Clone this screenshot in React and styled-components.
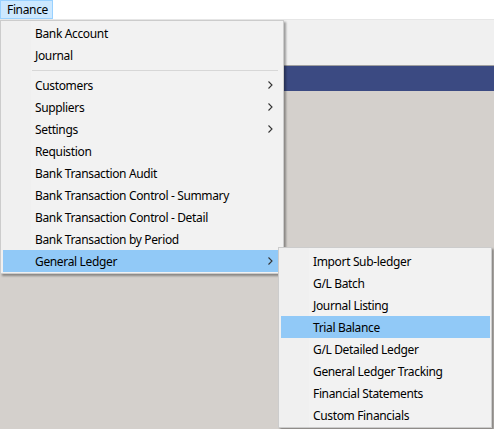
import React from "react";
import styled, { createGlobalStyle } from "styled-components";

const Global = createGlobalStyle`
  html, body { margin: 0; padding: 0; }
  body {
    width: 494px; height: 429px; overflow: hidden;
    font-family: "Noto Sans", "Open Sans", sans-serif;
    font-size: 12px; color: #000;
    letter-spacing: -0.35px;
    background: #d4d0cc;
  }
`;

const Page = styled.div`
  position: relative;
  width: 494px;
  height: 429px;
  display: flex;
  flex-direction: column;
  background: #d4d0cc;
`;

const MenuBar = styled.div`
  height: 19px;
  background: #ffffff;
  border-bottom: 1px solid #e6e6e6;
  display: flex;
  align-items: stretch;
`;

const MenuBarItem = styled.div`
  padding: 0 6px;
  display: flex;
  align-items: center;
  background: ${p => (p.$open ? "#cce8ff" : "transparent")};
  border: 1px solid ${p => (p.$open ? "#99d1ff" : "transparent")};
  height: 17px;
  width: 39px;
`;

const ToolArea = styled.div`
  height: 45px;
  background: #f0f0f0;
  border-bottom: 1px solid #a0a0a0;
`;

const TitleBar = styled.div`
  height: 25px;
  background: #3b4a82;
`;

const Body = styled.div`
  flex: 1;
  background: #d4d0cc;
`;

const Menu = styled.div`
  position: absolute;
  left: ${p => p.$left}px;
  top: ${p => p.$top}px;
  width: ${p => p.$width}px;
  box-sizing: border-box;
  background: linear-gradient(to right, #f0f0f0 0, #f0f0f0 ${p => p.$gutter}px, #f2f2f2 ${p => p.$gutter}px);
  border: 1px solid #cccccc;
  padding: ${p => p.$pt}px ${p => p.$pr}px 1px 2px;
  box-shadow: 2px 2px 2px rgba(0, 0, 0, 0.35);
  display: flex;
  flex-direction: column;
`;

const Item = styled.div`
  height: 22px;
  display: flex;
  align-items: center;
  padding-left: 32px;
  padding-right: 3px;
  background: ${p => (p.$active ? "#91c9f7" : "transparent")};
  white-space: nowrap;
`;

const Label = styled.span`
  flex: 1;
`;

const Separator = styled.div`
  height: 8px;
  display: flex;
  align-items: center;
  padding-left: 29px;
  &::after {
    content: "";
    flex: 1;
    height: 1px;
    background: #d7d7d7;
  }
`;

const Chevron = () => (
  <svg width="5" height="8" viewBox="0 0 5 8" style={{ marginRight: 2 }}>
    <path d="M0.5 0.5 L4 4 L0.5 7.5" fill="none" stroke="#333" strokeWidth="1.1" />
  </svg>
);

const mainItems = [
  { t: "Bank Account" },
  { t: "Journal" },
  { sep: true },
  { t: "Customers", sub: true },
  { t: "Suppliers", sub: true },
  { t: "Settings", sub: true },
  { t: "Requistion" },
  { t: "Bank Transaction Audit" },
  { t: "Bank Transaction Control - Summary" },
  { t: "Bank Transaction Control - Detail" },
  { t: "Bank Transaction by Period" },
  { t: "General Ledger", sub: true, active: true },
];

const subItems = [
  { t: "Import Sub-ledger" },
  { t: "G/L Batch" },
  { t: "Journal Listing" },
  { t: "Trial Balance", active: true },
  { t: "G/L Detailed Ledger" },
  { t: "General Ledger Tracking" },
  { t: "Financial Statements" },
  { t: "Custom Financials" },
];

const renderItems = items =>
  items.map((it, i) =>
    it.sep ? (
      <Separator key={i} />
    ) : (
      <Item key={i} $active={it.active}>
        <Label>{it.t}</Label>
        {it.sub && <Chevron />}
      </Item>
    )
  );

export default function App() {
  return (
    <>
      <Global />
      <Page>
        <MenuBar>
          <MenuBarItem $open>Finance</MenuBarItem>
        </MenuBar>
        <ToolArea />
        <TitleBar />
        <Body />
        <Menu $left={0} $top={20} $width={284} $pt={1} $pr={5} $gutter={30}>
          {renderItems(mainItems)}
        </Menu>
        <Menu $left={278} $top={247} $width={214} $pt={2} $pr={1} $gutter={30}>
          {renderItems(subItems)}
        </Menu>
      </Page>
    </>
  );
}
